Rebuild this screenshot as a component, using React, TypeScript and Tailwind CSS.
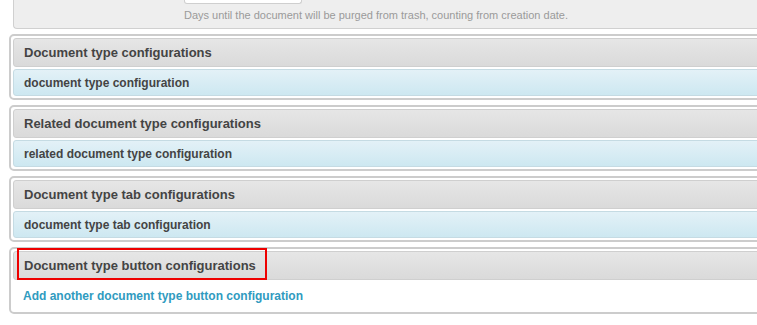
const groups = [
    { title: "Document type configurations", row: "document type configuration" },
    { title: "Related document type configurations", row: "related document type configuration" },
    { title: "Document type tab configurations", row: "document type tab configuration" }
]

const Header = ({ title }: { title: string }) => (
    <div className="h-[29px] flex items-center px-[10px] border border-[#cfcfcf] rounded-[3px] bg-gradient-to-b from-[#e6e6e6] to-[#dadada] text-[13px] font-bold text-[#444]">
        {title}
    </div>
)

export default function App() {
    return (
        <div className="w-[757px] h-[325px] overflow-hidden bg-white font-['Liberation_Sans',Arial,sans-serif]">
            <div className="w-[800px] pl-[9px]">
                <div className="ml-[4px] h-[29px] border-l border-b border-[#d0d0d0] rounded-bl-[4px] bg-[#eeeeee] pl-[170px]">
                    <div className="w-[118px] h-[4px] bg-white border-x border-b border-[#cfcfcf] rounded-b-[3px]" />
                    <p className="mt-[5px] text-[11px] leading-[13px] text-[#9a9a9a]">Days until the document will be purged from trash, counting from creation date.</p>
                </div>
                <div className="mt-[5px] flex flex-col gap-[5px]">
                    {groups.map((g) => (
                        <div key={g.title} className="border-2 border-[#cccccc] rounded-[5px] p-[2px] bg-white">
                            <Header title={g.title} />
                            <div className="mt-[2px] h-[27px] flex items-center px-[10px] border border-[#c5dbe3] rounded-[3px] bg-gradient-to-b from-[#e3f1f7] to-[#cde8f1] text-[12px] font-bold text-[#444]">
                                {g.row}
                            </div>
                        </div>
                    ))}
                    <div className="border-2 border-[#cccccc] rounded-[5px] p-[2px] bg-white">
                        <div className="relative">
                            <Header title="Document type button configurations" />
                            <div className="absolute left-[4px] top-[-3px] w-[250px] h-[32px] border-2 border-[#ee0000]" />
                        </div>
                        <div className="h-[30px] pt-[2px] flex items-center px-[10px] text-[12px] font-bold text-[#309bbf]">
                            Add another document type button configuration
                        </div>
                    </div>
                </div>
            </div>
        </div>
    )
}
